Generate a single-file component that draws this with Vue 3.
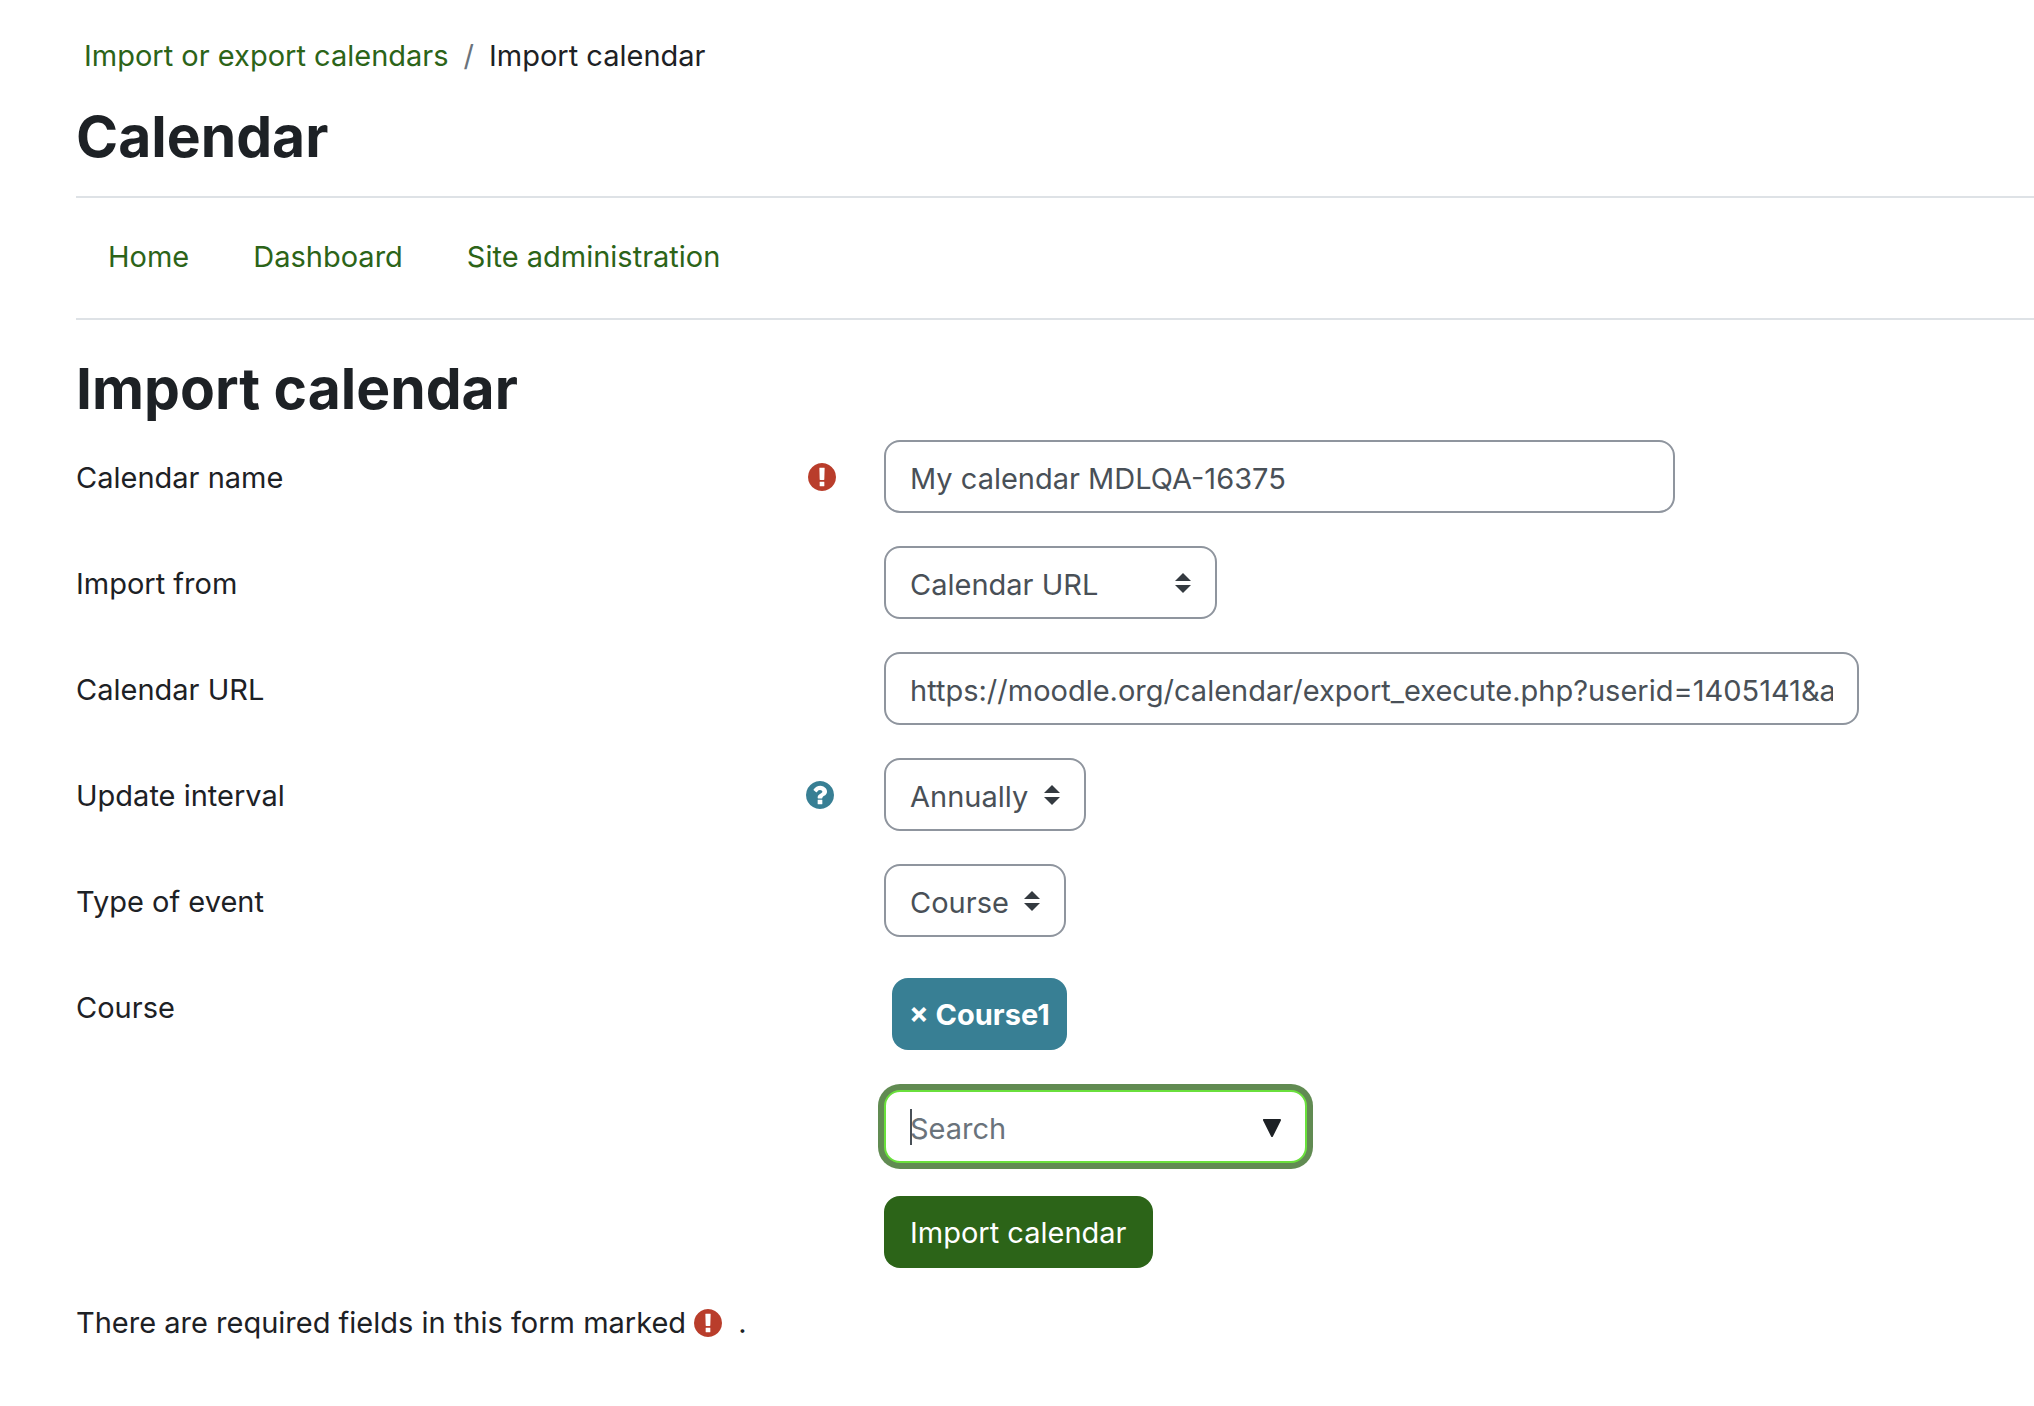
<!--
  Import calendar page: breadcrumb, navigation and the import form
-->

<template>
  <div class="page">
    <nav class="breadcrumb" aria-label="Breadcrumb">
      <a class="breadcrumb__link" href="#">Import or export calendars</a>
      <span class="breadcrumb__separator">/</span>
      <span>Import calendar</span>
    </nav>

    <h1 class="title">Calendar</h1>

    <nav class="menu" aria-label="Main">
      <a v-for="item in menuItems" :key="item" class="menu__link" href="#">{{ item }}</a>
    </nav>

    <main>
      <h2 class="title">Import calendar</h2>

      <form class="form" @submit.prevent>
        <div class="form__row">
          <div class="form__label">
            <label for="name">Calendar name</label>
            <svg class="icon icon--required" viewBox="128 128 1536 1536" role="img" aria-label="Required">
              <path :d="requiredPath" />
            </svg>
          </div>
          <div class="form__field">
            <input id="name" v-model="form.name" class="control control--name" type="text" />
          </div>
        </div>

        <div class="form__row">
          <div class="form__label">
            <label for="importfrom">Import from</label>
          </div>
          <div class="form__field">
            <select id="importfrom" v-model="form.importFrom" class="control control--select">
              <option v-for="option in importOptions" :key="option">{{ option }}</option>
            </select>
          </div>
        </div>

        <div class="form__row">
          <div class="form__label">
            <label for="url">Calendar URL</label>
          </div>
          <div class="form__field">
            <input id="url" v-model="form.url" class="control control--url" type="text" />
          </div>
        </div>

        <div class="form__row">
          <div class="form__label">
            <label for="interval">Update interval</label>
            <button class="help" type="button" aria-label="Help with Update interval">
              <svg class="icon icon--help" viewBox="128 128 1536 1536" aria-hidden="true">
                <path :d="helpPath" />
              </svg>
            </button>
          </div>
          <div class="form__field">
            <select id="interval" v-model="form.interval" class="control control--select">
              <option v-for="option in intervalOptions" :key="option">{{ option }}</option>
            </select>
          </div>
        </div>

        <div class="form__row">
          <div class="form__label">
            <label for="eventtype">Type of event</label>
          </div>
          <div class="form__field">
            <select id="eventtype" v-model="form.eventType" class="control control--select">
              <option v-for="option in eventOptions" :key="option">{{ option }}</option>
            </select>
          </div>
        </div>

        <div class="form__row">
          <div class="form__label">
            <label for="course">Course</label>
          </div>
          <div class="form__field">
            <div class="tags">
              <button v-for="course in courses" :key="course" class="tag" type="button">
                <span aria-hidden="true">×</span> {{ course }}
              </button>
            </div>
            <div class="search" :class="{ 'search--focused': isFocused }">
              <input
                id="course"
                ref="searchInput"
                v-model="search"
                class="control search__input"
                type="text"
                placeholder="Search"
                @focus="isFocused = true"
              />
              <span v-if="isFocused && !search" class="search__caret"></span>
              <button class="search__toggle" type="button" aria-label="Show courses">
                <svg class="search__arrow" viewBox="0 0 20 20" aria-hidden="true">
                  <path d="M2 2H18L10 18Z" />
                </svg>
              </button>
            </div>
          </div>
        </div>

        <div class="form__row">
          <div></div>
          <div class="form__field">
            <button class="submit" type="submit">Import calendar</button>
          </div>
        </div>
      </form>

      <p class="note">
        <span>There are required fields in this form marked</span>
        <svg class="icon icon--required" viewBox="128 128 1536 1536" role="img" aria-label="Required">
          <path :d="requiredPath" />
        </svg>
        <span class="note__end">.</span>
      </p>
    </main>
  </div>
</template>

<script setup>
import { onMounted, reactive, ref } from 'vue'

const menuItems = ['Home', 'Dashboard', 'Site administration']
const importOptions = ['Calendar file (.ics)', 'Calendar URL']
const intervalOptions = ['Never', 'Hourly', 'Daily', 'Weekly', 'Monthly', 'Annually']
const eventOptions = ['User', 'Group', 'Course', 'Site']
const courses = ref(['Course1'])

const form = reactive({
  name: 'My calendar MDLQA-16375',
  importFrom: 'Calendar URL',
  url: 'https://moodle.org/calendar/export_execute.php?userid=1405141&authtoken=',
  interval: 'Annually',
  eventType: 'Course'
})

const search = ref('')
const searchInput = ref(null)
const isFocused = ref(true)

onMounted(() => {
  searchInput.value.focus()
})

const requiredPath =
  'M896 128q209 0 385.500 103t279.500 279.500 103 385.500-103 385.500-279.500 279.500-385.500 103-385.500-103-279.500-279.500-103-385.500 103-385.500 279.500-279.500 385.500-103zm128 1247v-190q0-14-9-23.500t-22-9.500h-192q-13 0-23 10t-10 23v190q0 13 10 23t23 10h192q13 0 22-9.500t9-23.500zm-2-344l18-621q0-12-10-18-10-8-24-8h-220q-14 0-24 8-10 6-10 18l17 621q0 10 10 17.500t24 7.500h185q14 0 23.500-7.500t10.500-17.500z'

const helpPath =
  'M1024 1376v-192q0-14-9-23t-23-9h-192q-14 0-23 9t-9 23v192q0 14 9 23t23 9h192q14 0 23-9t9-23zm256-672q0-88-55.500-163t-138.500-116-170-41q-243 0-371 213-15 24 8 42l132 100q7 6 19 6 16 0 25-12 53-68 86-92 34-24 86-24 48 0 85.500 26t37.500 59q0 38-20 61t-68 45q-63 28-115.500 86.500t-52.500 125.500v36q0 14 9 23t23 9h192q14 0 23-9t9-23q0-19 21.500-49.500t54.500-49.500q32-18 49-28.500t46-35 44.500-48 28-60.500 12.500-81zm384 192q0 209-103 385.500t-279.500 279.500-385.500 103-385.500-103-279.500-279.500-103-385.500 103-385.500 279.500-279.500 385.500-103 385.500 103 279.500 279.500 103 385.500z'
</script>

<style>
body {
  margin: 0;
  background-color: #ffffff;
}
</style>

<style scoped>
.page {
  padding: 33px 0 48px 76px;
  font-family: Inter, 'Liberation Sans', sans-serif;
  font-size: 29px;
  line-height: 45px;
  color: #1d2125;
}

.breadcrumb {
  display: flex;
  gap: 15px;
  padding-left: 8px;
  margin-bottom: 23px;
}

.breadcrumb__link,
.menu__link {
  color: #2c6418;
  text-decoration: none;
}

.breadcrumb__link:hover,
.menu__link:hover {
  text-decoration: underline;
}

.breadcrumb__separator {
  color: #6a737b;
}

.title {
  margin: 0;
  font-size: 57px;
  font-weight: 700;
  line-height: 72px;
}

.menu {
  display: flex;
  gap: 64px;
  margin: 23px 0 33px;
  padding: 36px 32px 39px;
  border-top: 2px solid #dee2e6;
  border-bottom: 2px solid #dee2e6;
}

.form {
  display: flex;
  flex-direction: column;
  gap: 33px;
  margin-top: 15px;
}

.form__row {
  display: grid;
  grid-template-columns: minmax(240px, 808fr) minmax(0, 1150fr);
}

.form__label {
  display: flex;
  align-items: center;
  justify-content: space-between;
  align-self: start;
  height: 74px;
  margin-bottom: -1px;
  padding-right: 48px;
}

.icon {
  display: block;
  flex: none;
  width: 28px;
  height: 28px;
}

.icon--required {
  fill: #b93d2b;
}

.icon--help {
  fill: #387f94;
}

.help {
  padding: 0 2px;
  border: none;
  background: none;
  cursor: pointer;
}

.control {
  display: block;
  box-sizing: border-box;
  width: 100%;
  height: 73px;
  padding: 3px 24px 0;
  border: 2px solid #8f959e;
  border-radius: 16px;
  font: inherit;
  color: #495057;
  background-color: #ffffff;
}

.control::placeholder {
  color: #6a737b;
  opacity: 1;
}

.control--name {
  max-width: 791px;
}

.control--url {
  max-width: 975px;
}

.control--select {
  width: auto;
  padding-right: 55px;
  appearance: none;
  background-image: url("data:image/svg+xml,%3Csvg xmlns='http://www.w3.org/2000/svg' viewBox='0 0 16 20'%3E%3Cpath fill='%23343a40' d='M0 8 8 0l8 8zM0 12l8 8 8-8z'/%3E%3C/svg%3E");
  background-repeat: no-repeat;
  background-position: right 24px center;
  background-size: 16px 20px;
}

.tags {
  display: flex;
  padding: 8px 8px 40px;
}

.tag {
  height: 72px;
  padding: 1px 17px 0;
  border: none;
  border-radius: 16px;
  font: inherit;
  font-weight: 700;
  color: #ffffff;
  background-color: #387f94;
  cursor: pointer;
}

.search {
  position: relative;
  max-width: 423px;
}

.search__input {
  padding-right: 80px;
  outline: none;
  caret-color: transparent;
}

.search--focused .search__input {
  border-color: #6ae03c;
  box-shadow: 0 0 0 6px rgba(44, 100, 24, 0.75);
}

.search__caret {
  position: absolute;
  top: 19px;
  left: 26px;
  width: 2px;
  height: 36px;
  background-color: #495057;
}

.search__toggle {
  position: absolute;
  top: 0;
  right: 16px;
  display: flex;
  align-items: center;
  height: 73px;
  padding: 2px 9px 0;
  border: none;
  background: none;
  cursor: pointer;
}

.search__arrow {
  width: 20px;
  height: 20px;
  fill: #1d2125;
  stroke: #1d2125;
  stroke-width: 2;
  stroke-linejoin: round;
}

.submit {
  display: block;
  height: 72px;
  padding: 1px 26px 0;
  border: none;
  border-radius: 16px;
  font: inherit;
  color: #ffffff;
  background-color: #2c6418;
  cursor: pointer;
}

.note {
  display: flex;
  align-items: center;
  gap: 8px;
  margin: 32px 0 0;
}

.note__end {
  margin-left: 8px;
}
</style>
